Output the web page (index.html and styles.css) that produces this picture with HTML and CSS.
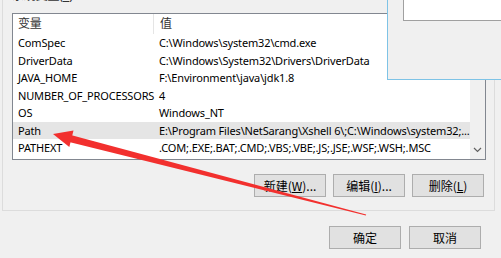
FILE: index.html
```html
<!DOCTYPE html>
<html lang="zh-CN">

<head>
    <meta charset="UTF-8">
    <title>系统变量</title>
    <link rel="stylesheet" href="styles.css">
</head>

<body>
    <div class="group">
        <div class="caption"><span>系统变量(<u>S</u>)</span></div>

        <div class="listbox">
            <div class="rows">
                <div class="row head">
                    <div class="col-name">变量</div>
                    <div class="col-value">值</div>
                </div>
                <div class="row">
                    <div class="col-name">ComSpec</div>
                    <div class="col-value">C:\Windows\system32\cmd.exe</div>
                </div>
                <div class="row">
                    <div class="col-name">DriverData</div>
                    <div class="col-value">C:\Windows\System32\Drivers\DriverData</div>
                </div>
                <div class="row">
                    <div class="col-name">JAVA_HOME</div>
                    <div class="col-value">F:\Environment\java\jdk1.8</div>
                </div>
                <div class="row">
                    <div class="col-name">NUMBER_OF_PROCESSORS</div>
                    <div class="col-value">4</div>
                </div>
                <div class="row">
                    <div class="col-name">OS</div>
                    <div class="col-value">Windows_NT</div>
                </div>
                <div class="row selected">
                    <div class="col-name">Path</div>
                    <div class="col-value">E:\Program Files\NetSarang\Xshell 6\;C:\Windows\system32;...</div>
                </div>
                <div class="row">
                    <div class="col-name">PATHEXT</div>
                    <div class="col-value">.COM;.EXE;.BAT;.CMD;.VBS;.VBE;.JS;.JSE;.WSF;.WSH;.MSC</div>
                </div>
            </div>
            <div class="scrollbar">
                <svg class="down" width="9" height="6" viewBox="0 0 9 6">
                    <path d="M1 1 L4.5 4.5 L8 1" fill="none" stroke="#606060" stroke-width="1.2" />
                </svg>
            </div>
        </div>

        <div class="buttons">
            <button>新建(<u>W</u>)...</button>
            <button>编辑(<u>I</u>)...</button>
            <button>删除(<u>L</u>)</button>
        </div>
    </div>

    <div class="buttons footer">
        <button>确定</button>
        <button>取消</button>
    </div>

    <!-- window lying over the dialog -->
    <div class="other-window">
        <div class="other-field"></div>
    </div>

    <!-- red annotation arrow -->
    <svg class="arrow" width="501" height="258" viewBox="0 0 501 258">
        <polygon points="53,134 73.5,130.6 69.3,147" fill="#f2302e" />
        <polygon points="68.9,134.6 366.1,214.6 365.9,215.4 67.1,141.4" fill="#f2302e" />
    </svg>
</body>

</html>
```

FILE: styles.css
```css
body {
    margin: 0;
    width: 501px;
    height: 258px;
    overflow: hidden;
    position: relative;
    background: #f0f0f0;
    font-family: "Noto Sans", "Noto Sans CJK SC", sans-serif;
    font-size: 11px;
    letter-spacing: -0.15px;
    color: #000;
}

u {
    text-decoration: underline;
}

.group {
    margin-left: 2px;
    width: 473px;
    padding: 0 9px 13px 9px;
    border: 1px solid #dcdcdc;
    border-top: none;
}

.caption {
    height: 13px;
    overflow: hidden;
}

.caption span {
    display: block;
    margin-top: -12px;
    line-height: 16px;
    font-size: 12px;
    color: #333;
}

.listbox {
    display: flex;
    width: 472px;
    height: 145px;
    border: 1px solid #828790;
    background: white;
    overflow: hidden;
}

.rows {
    flex: 1;
}

.row {
    display: flex;
    height: 17.5px;
    line-height: 17.5px;
    white-space: nowrap;
}

.row.head {
    height: 20px;
    line-height: 19px;
    font-size: 12px;
    color: #333;
}

.row.selected {
    background: #e5e5e5;
}

.col-name {
    width: 135px;
    padding-left: 5px;
    flex-shrink: 0;
}

.col-value {
    padding-left: 6px;
}

.head .col-value {
    border-left: 1px solid #e5e5e5;
}

.scrollbar {
    width: 15px;
    background: #f0f0f0;
    display: flex;
    flex-direction: column;
    justify-content: flex-end;
    align-items: center;
}

.scrollbar .down {
    margin-bottom: 6px;
}

.buttons {
    display: flex;
    justify-content: flex-end;
    gap: 7px;
    margin-top: 14px;
    padding-right: 1px;
}

.buttons.footer {
    margin-top: 15px;
    padding-right: 20px;
    gap: 8px;
}

button {
    width: 72px;
    height: 23px;
    padding: 0;
    background: #e1e1e1;
    border: 1px solid #adadad;
    font-family: "Noto Sans CJK SC", "Noto Sans", sans-serif;
    font-size: 12px;
    letter-spacing: 0;
    color: #000;
}

.other-window {
    position: absolute;
    left: 387px;
    top: 0;
    width: 120px;
    height: 79px;
    background: #f0f0f0;
    border-left: 1px solid #7ec3e6;
    border-bottom: 1px solid #7ec3e6;
}

.other-field {
    margin-left: 15px;
    height: 20px;
    background: white;
    border-left: 1px solid #a0a0a0;
    border-bottom: 1px solid #a0a0a0;
}

.arrow {
    position: absolute;
    left: 0;
    top: 0;
    pointer-events: none;
}
```
